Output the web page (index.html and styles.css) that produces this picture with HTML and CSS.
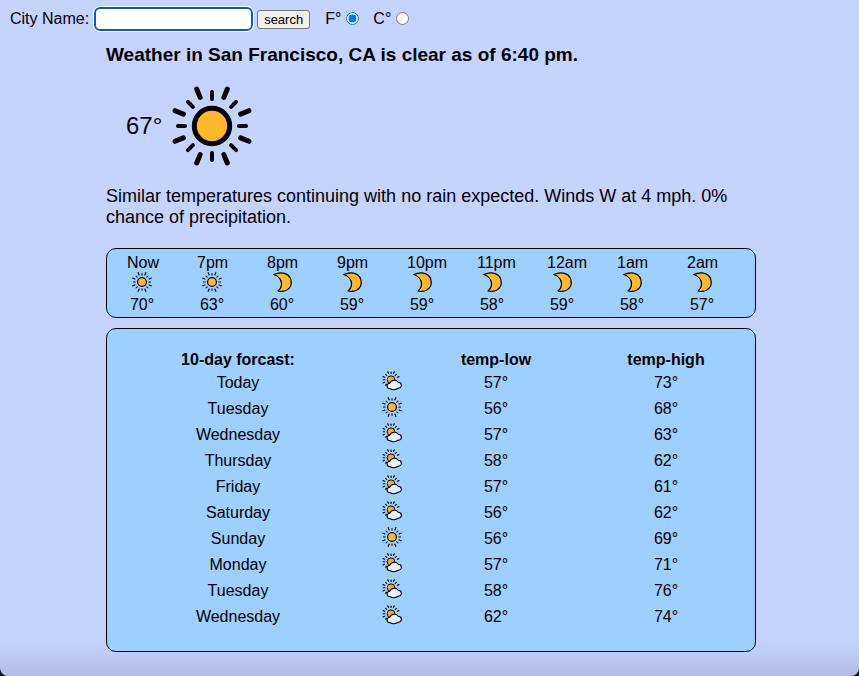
FILE: index.html
```
<!DOCTYPE html>
<html lang="en">
<head>
<meta charset="utf-8">
<title>Weather</title>
<link rel="stylesheet" href="styles.css">
</head>
<body>
<svg class="sprite" aria-hidden="true">
  <defs>
    <g id="short-ray"><path d="M0-34V-27"/></g>
    <g id="long-ray"><path d="M0-40V-31"/></g>
    <g id="rays" stroke="#000" stroke-linecap="round">
      <g stroke-width="4">
        <use href="#short-ray"/><use href="#short-ray" transform="rotate(45)"/>
        <use href="#short-ray" transform="rotate(90)"/><use href="#short-ray" transform="rotate(135)"/>
        <use href="#short-ray" transform="rotate(180)"/><use href="#short-ray" transform="rotate(225)"/>
        <use href="#short-ray" transform="rotate(270)"/><use href="#short-ray" transform="rotate(315)"/>
      </g>
      <g stroke-width="5">
        <use href="#long-ray" transform="rotate(22.5)"/><use href="#long-ray" transform="rotate(67.5)"/>
        <use href="#long-ray" transform="rotate(112.5)"/><use href="#long-ray" transform="rotate(157.5)"/>
        <use href="#long-ray" transform="rotate(202.5)"/><use href="#long-ray" transform="rotate(247.5)"/>
        <use href="#long-ray" transform="rotate(292.5)"/><use href="#long-ray" transform="rotate(337.5)"/>
      </g>
    </g>
    <symbol id="sun" viewBox="-40 -40 80 80">
      <use href="#rays"/>
      <circle r="17.7" fill="#ffb92e" stroke="#000" stroke-width="5"/>
    </symbol>
    <symbol id="moon" viewBox="0 0 80 80">
      <path d="M7 10C42-6 77 8 77 42C77 70 48 82 24 76C44 60 46 24 7 10Z" fill="#ffb92e" stroke="#000" stroke-width="5" stroke-linejoin="round"/>
    </symbol>
    <symbol id="partly" viewBox="0 0 80 80">
      <g transform="translate(36 35) scale(.86)">
        <g stroke="#000" stroke-width="5.5" stroke-linecap="round">
          <path d="M0-36V-29M-25-25L-20-20M25-25L20-20M-36 0H-29M-25 25L-21 21M-15-37L-12-30M15-37L12-30M-37-15L-30-12M37-15L30-12M-37 15L-30 12"/>
        </g>
        <circle r="18" fill="#ffa820" stroke="#000" stroke-width="4.5"/>
      </g>
      <path d="M33 71C16 70 17 49 31 49C37 34 59 34 65 45C82 46 82 68 64 69C55 76 41 76 33 71Z" fill="#e6f3ff" stroke="#000" stroke-width="4.5" stroke-linejoin="round"/>
    </symbol>
  </defs>
</svg>

<form class="search">
  <label for="city">City Name:</label>
  <input class="city" id="city" type="text">
  <button class="submit" type="button">search</button>
  <label class="unit">F°<input type="radio" name="unit" checked></label>
  <label class="unit">C°<input type="radio" name="unit"></label>
</form>

<main>
  <h1>Weather in San Francisco, CA is clear as of 6:40 pm.</h1>
  <div class="current">
    <span>67°</span>
    <svg class="icon-large" role="img" aria-label="Clear"><use href="#sun"/></svg>
  </div>
  <p class="summary">Similar temperatures continuing with no rain expected. Winds W at 4 mph. 0% chance of precipitation.</p>

  <section class="panel hours">
    <div class="hour"><span>Now</span><svg class="icon"><use href="#sun"/></svg><span class="temp">70°</span></div>
    <div class="hour"><span>7pm</span><svg class="icon"><use href="#sun"/></svg><span class="temp">63°</span></div>
    <div class="hour"><span>8pm</span><svg class="icon"><use href="#moon"/></svg><span class="temp">60°</span></div>
    <div class="hour"><span>9pm</span><svg class="icon"><use href="#moon"/></svg><span class="temp">59°</span></div>
    <div class="hour"><span>10pm</span><svg class="icon"><use href="#moon"/></svg><span class="temp">59°</span></div>
    <div class="hour"><span>11pm</span><svg class="icon"><use href="#moon"/></svg><span class="temp">58°</span></div>
    <div class="hour"><span>12am</span><svg class="icon"><use href="#moon"/></svg><span class="temp">59°</span></div>
    <div class="hour"><span>1am</span><svg class="icon"><use href="#moon"/></svg><span class="temp">58°</span></div>
    <div class="hour"><span>2am</span><svg class="icon"><use href="#moon"/></svg><span class="temp">57°</span></div>
  </section>

  <section class="panel days">
    <table>
      <colgroup><col class="col-day"><col class="col-icon"><col class="col-low"><col></colgroup>
      <thead><tr><th>10-day forcast:</th><th></th><th>temp-low</th><th>temp-high</th></tr></thead>
      <tbody>
        <tr><td>Today</td><td><svg class="icon"><use href="#partly"/></svg></td><td>57°</td><td>73°</td></tr>
        <tr><td>Tuesday</td><td><svg class="icon"><use href="#sun"/></svg></td><td>56°</td><td>68°</td></tr>
        <tr><td>Wednesday</td><td><svg class="icon"><use href="#partly"/></svg></td><td>57°</td><td>63°</td></tr>
        <tr><td>Thursday</td><td><svg class="icon"><use href="#partly"/></svg></td><td>58°</td><td>62°</td></tr>
        <tr><td>Friday</td><td><svg class="icon"><use href="#partly"/></svg></td><td>57°</td><td>61°</td></tr>
        <tr><td>Saturday</td><td><svg class="icon"><use href="#partly"/></svg></td><td>56°</td><td>62°</td></tr>
        <tr><td>Sunday</td><td><svg class="icon"><use href="#sun"/></svg></td><td>56°</td><td>69°</td></tr>
        <tr><td>Monday</td><td><svg class="icon"><use href="#partly"/></svg></td><td>57°</td><td>71°</td></tr>
        <tr><td>Tuesday</td><td><svg class="icon"><use href="#partly"/></svg></td><td>58°</td><td>76°</td></tr>
        <tr><td>Wednesday</td><td><svg class="icon"><use href="#partly"/></svg></td><td>62°</td><td>74°</td></tr>
      </tbody>
    </table>
  </section>
</main>
</body>
</html>
```
FILE: styles.css
```
* {
  box-sizing: border-box;
}

html {
  background: #1a0c20;
}

body {
  min-height: 100vh;
  margin: 0;
  padding: 7px 0 24px 3px;
  border-radius: 0 0 8px 8px;
  background: linear-gradient(to top, #b0bde9, #c5d3ff 36px);
  color: #000;
  font: 16px/20px "Liberation Sans", Arial, sans-serif;
}

.sprite {
  position: absolute;
  width: 0;
  height: 0;
}

.search {
  display: flex;
  align-items: center;
  height: 24px;
  padding-left: 7px;
}

.city {
  width: 159px;
  height: 24px;
  margin: 0 4px 0 5px;
  border: 2px solid #0b57d0;
  border-radius: 6px;
  background: #fff;
  outline: 1px solid #fff;
}

.submit {
  height: 19px;
  margin-right: 15px;
  padding: 0 6px;
  border: 1px solid #767676;
  border-radius: 3px;
  background: #efefef;
  color: #000;
  font: 13px/17px "Liberation Sans", Arial, sans-serif;
}

.unit {
  display: flex;
  align-items: center;
  margin-right: 14px;
}

.unit input {
  width: 13px;
  height: 13px;
  margin: 0 0 2px 5px;
}

main {
  max-width: 650px;
  margin: 0 auto;
}

h1 {
  margin: 12px 0 0;
  font-size: 19px;
  line-height: 24px;
}

.current {
  display: flex;
  align-items: center;
  gap: 10px;
  height: 80px;
  margin: 19px 20px 20px;
  font-size: 24px;
}

.icon-large {
  width: 80px;
  height: 80px;
}

.summary {
  margin: 0 0 20px;
  font-size: 18px;
  line-height: 21px;
}

.panel {
  border: 1px solid #000;
  border-radius: 10px;
  background: #9dcfff;
}

.icon {
  display: block;
  width: 20px;
  height: 20px;
  margin: 0 auto;
}

.hours {
  display: flex;
  padding: 4px 0 2px;
  margin-bottom: 10px;
}

.hour {
  width: 70px;
  padding: 0 20px;
  line-height: 20px;
  white-space: nowrap;
}

.hour .icon {
  margin-top: -1px;
}

.hour .temp {
  display: block;
  margin: 3px 0 0;
  text-align: center;
}

.days {
  padding: 21px 0;
}

table {
  width: 100%;
  border-collapse: collapse;
  table-layout: fixed;
}

.col-day {
  width: 262px;
}

.col-icon {
  width: 46px;
}

.col-low {
  width: 162px;
}

th,
td {
  height: 26px;
  padding: 0;
  text-align: center;
}

td .icon {
  margin-bottom: 4px;
}

th {
  height: 20px;
}
```
